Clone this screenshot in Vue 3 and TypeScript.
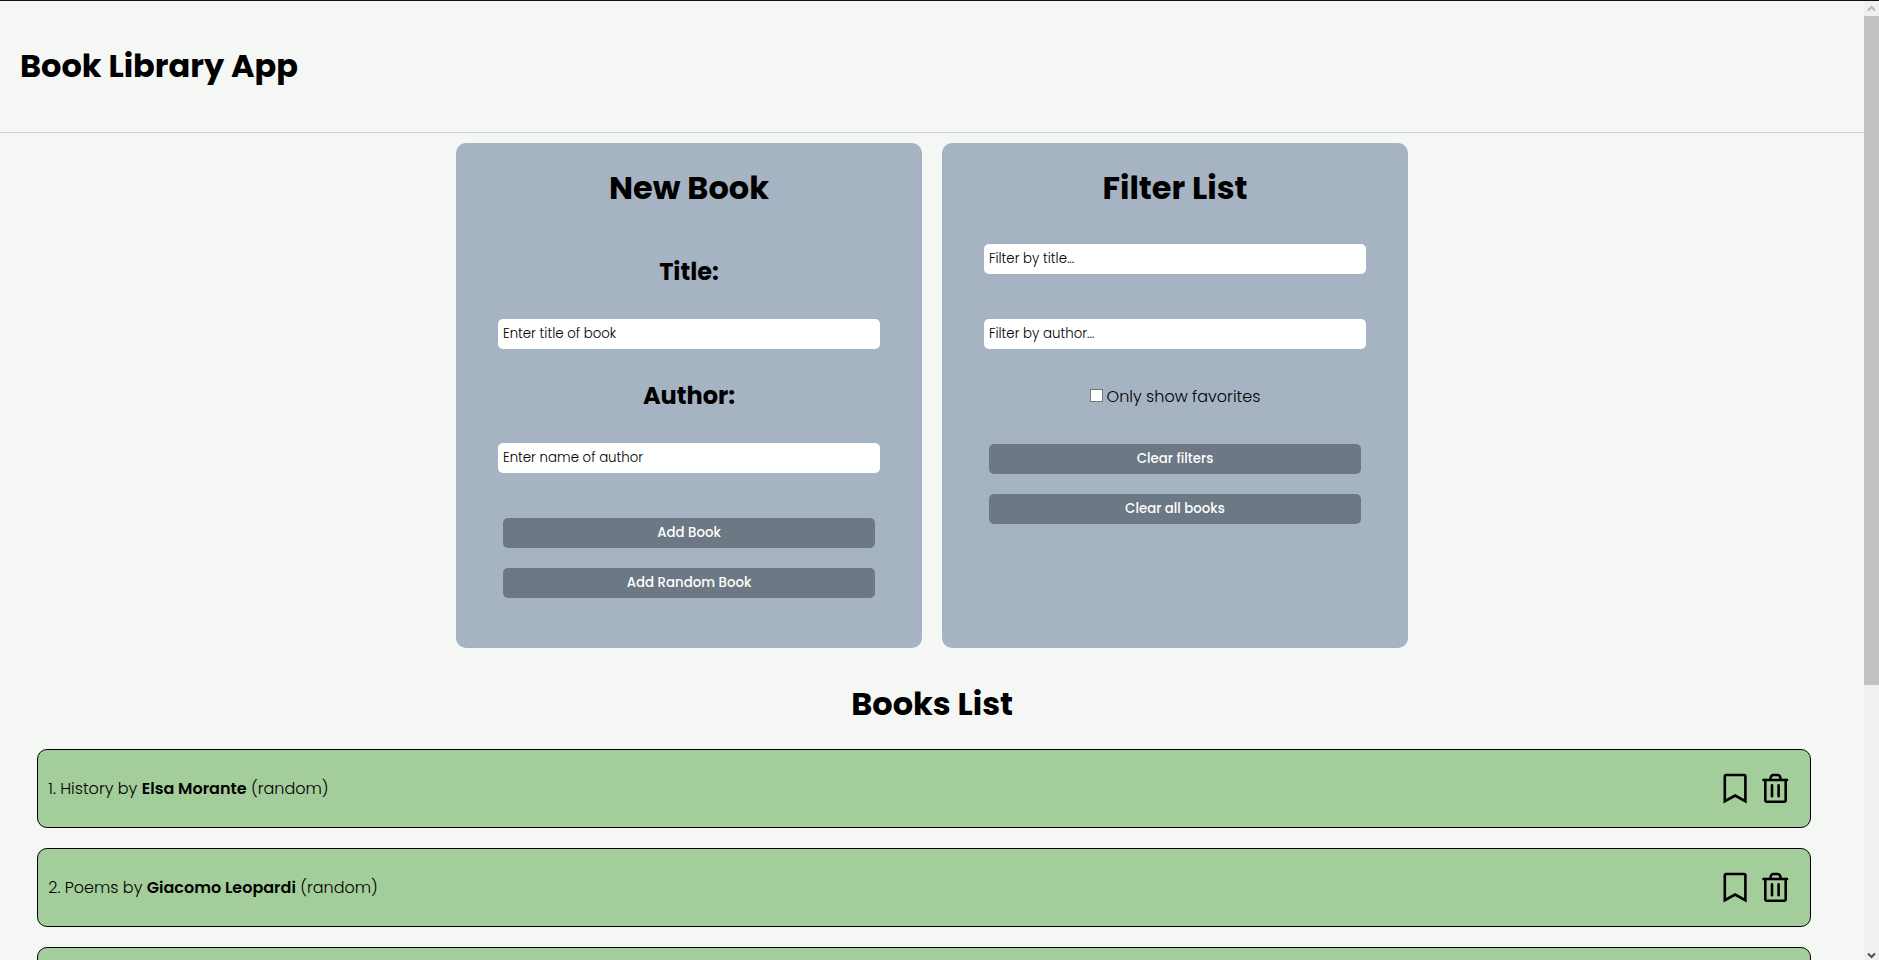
<script setup lang="ts">
import { computed, ref } from 'vue'

interface Book {
  id: number
  title: string
  author: string
  source: string
  favorite: boolean
}

const books = ref<Book[]>([
  { id: 1, title: 'History', author: 'Elsa Morante', source: 'random', favorite: false },
  { id: 2, title: 'Poems', author: 'Giacomo Leopardi', source: 'random', favorite: false },
  { id: 3, title: '', author: '', source: 'random', favorite: false },
])

const newTitle = ref('')
const newAuthor = ref('')
const titleFilter = ref('')
const authorFilter = ref('')
const onlyFavorites = ref(false)

const visibleBooks = computed(() =>
  books.value.filter(
    (book) =>
      book.title.toLowerCase().includes(titleFilter.value.toLowerCase()) &&
      book.author.toLowerCase().includes(authorFilter.value.toLowerCase()) &&
      (!onlyFavorites.value || book.favorite),
  ),
)

function pushBook(title: string, author: string, source: string) {
  const id = Math.max(0, ...books.value.map((book) => book.id)) + 1
  books.value.push({ id, title, author, source, favorite: false })
}

function addBook() {
  if (!newTitle.value || !newAuthor.value) return
  pushBook(newTitle.value, newAuthor.value, 'manual')
  newTitle.value = ''
  newAuthor.value = ''
}

function addRandomBook() {
  const pool = books.value.filter((book) => book.title)
  const pick = pool[Math.floor(Math.random() * pool.length)]
  if (pick) pushBook(pick.title, pick.author, 'random')
}

function clearFilters() {
  titleFilter.value = ''
  authorFilter.value = ''
  onlyFavorites.value = false
}

function removeBook(id: number) {
  books.value = books.value.filter((book) => book.id !== id)
}
</script>

<template>
  <div class="window">
    <div class="page">
      <header class="app-header">
        <h1>Book Library App</h1>
      </header>

      <main>
        <div class="panels">
          <form class="panel" @submit.prevent="addBook">
            <h2>New Book</h2>
            <label class="field-label" for="title">Title:</label>
            <input id="title" v-model="newTitle" class="field" type="text" placeholder="Enter title of book" />
            <label class="field-label" for="author">Author:</label>
            <input id="author" v-model="newAuthor" class="field" type="text" placeholder="Enter name of author" />
            <div class="actions add-actions">
              <button type="submit">Add Book</button>
              <button type="button" @click="addRandomBook">Add Random Book</button>
            </div>
          </form>

          <section class="panel">
            <h2>Filter List</h2>
            <div class="filters">
              <input v-model="titleFilter" class="field" type="text" placeholder="Filter by title..." aria-label="Filter by title..." />
              <input v-model="authorFilter" class="field" type="text" placeholder="Filter by author..." aria-label="Filter by author..." />
            </div>
            <label class="favorites">
              <input v-model="onlyFavorites" type="checkbox" />
              <span>Only show favorites</span>
            </label>
            <div class="actions">
              <button type="button" @click="clearFilters">Clear filters</button>
              <button type="button" @click="books = []">Clear all books</button>
            </div>
          </section>
        </div>

        <section class="books">
          <h2>Books List</h2>
          <ul>
            <li v-for="(book, index) in visibleBooks" :key="book.id">
              <p v-if="book.title">{{ index + 1 }}. {{ book.title }} by <strong>{{ book.author }}</strong> ({{ book.source }})</p>
              <div class="book-actions">
                <button type="button" :aria-pressed="book.favorite" @click="book.favorite = !book.favorite">
                  <svg viewBox="0 0 32 32" aria-hidden="true">
                    <path
                      d="M7.200 2h17.800a1.400 1.400 0 0 1 1.400 1.400V28.200L16.100 22.600 5.800 28.200V3.400A1.400 1.400 0 0 1 7.200 2Z"
                      :fill="book.favorite ? 'currentColor' : 'none'"
                      stroke="currentColor"
                      stroke-width="2.600"
                    />
                  </svg>
                </button>
                <button type="button" @click="removeBook(book.id)">
                  <svg viewBox="0 0 32 32" fill="none" stroke="currentColor" stroke-width="2.600" stroke-linecap="round" aria-hidden="true">
                    <path d="M4.500 7h23.500" />
                    <path d="M6.300 7v20.200a1.500 1.500 0 0 0 1.500 1.500h17.400a1.500 1.500 0 0 0 1.500-1.500V7" />
                    <path d="M11.300 6.500C11.600 3.300 12.600 2 14.300 2h4.400c1.700 0 2.700 1.300 3 4.500" />
                    <path d="M13 12.400v10.800M19.600 12.400v10.800" />
                  </svg>
                </button>
              </div>
            </li>
          </ul>
        </section>
      </main>
    </div>

    <div class="scrollbar" aria-hidden="true">
      <svg class="arrow up" viewBox="0 0 15 15"><path d="M4 9.500 7.500 6 11 9.500" /></svg>
      <div class="track"><div class="thumb"></div></div>
      <svg class="arrow" viewBox="0 0 15 15"><path d="M4 8.500 7.500 12 11 8.500" /></svg>
    </div>
  </div>
</template>

<style>
body {
  margin: 0;
  background: #f5f7f4;
}
</style>

<style scoped>
* {
  box-sizing: border-box;
}

.window {
  display: flex;
  height: 100vh;
  border-top: 1px solid #130d1c;
  overflow: hidden;
  background: #f5f7f4;
  color: #000;
  font-family: Poppins, Inter, 'Open Sans', sans-serif;
  font-size: 16px;
  font-weight: 300;
  line-height: 24px;
}

.page {
  flex: 1;
  min-width: 0;
  overflow: hidden;
}

h1,
h2 {
  margin: 0;
  font-size: 32px;
  font-weight: 700;
  line-height: 48px;
}

.app-header {
  padding: 41px 20px 42px;
  border-bottom: 1px solid #d0d3cf;
}

.panels {
  display: flex;
  justify-content: center;
  gap: 20px;
  padding-top: 10px;
}

.panel {
  display: flex;
  flex-direction: column;
  align-items: center;
  width: 25%;
  padding: 21px 0 50px;
  border-radius: 10px;
  background: #a6b3c3;
}

.field-label {
  margin-top: 30px;
  font-size: 24px;
  font-weight: 700;
  line-height: 34px;
}

h2 + .field-label {
  margin-top: 43px;
}

.field {
  width: 82%;
  height: 30px;
  margin-top: 30px;
  padding: 0 5px;
  border: 0;
  border-radius: 5px;
  background: #fff;
  color: #000;
  font-family: inherit;
  font-weight: 300;
}

.field::placeholder {
  color: #000;
  opacity: 1;
}

.filters {
  display: flex;
  flex-direction: column;
  align-items: center;
  gap: 45px;
  width: 100%;
  padding-top: 32px;
}

.filters .field {
  margin-top: 0;
}

.favorites {
  display: flex;
  align-items: flex-start;
  gap: 4px;
  margin: 36px 0 35px;
}

.favorites input {
  width: 13px;
  height: 13px;
  margin: 4px 0 0;
  border: 1px solid #767676;
  appearance: none;
  background: #fff;
}

.favorites input:checked {
  background: #0075ff;
}

.actions {
  display: flex;
  flex-direction: column;
  gap: 20px;
  width: 82%;
  padding: 0 5px;
}

.add-actions {
  margin-top: 45px;
}

.actions button {
  height: 30px;
  padding: 0;
  border: 0;
  border-radius: 5px;
  background: #6c7883;
  color: #fff;
  font-family: inherit;
  font-weight: 500;
  cursor: pointer;
}

.books {
  padding: 32px 53px 20px 2%;
}

.books h2 {
  padding-left: 16px;
  text-align: center;
}

.books ul {
  display: flex;
  flex-direction: column;
  gap: 20px;
  margin: 21px 0 0;
  padding: 0;
  list-style: none;
}

.books li {
  display: flex;
  align-items: center;
  min-height: 79px;
  padding: 0 19px 0 10px;
  border: 1px solid #000;
  border-radius: 10px;
  background: #a3cd9a;
}

.books p {
  margin: 0;
}

.books strong {
  font-weight: 600;
}

.book-actions {
  display: flex;
  gap: 8px;
  margin-left: auto;
}

.book-actions button {
  width: 32px;
  height: 32px;
  padding: 0;
  border: 0;
  background: none;
  color: #000;
  cursor: pointer;
}

.book-actions svg {
  display: block;
  width: 32px;
  height: 32px;
}

.scrollbar {
  display: flex;
  flex-direction: column;
  width: 15px;
  background: #f0f0f0;
}

.arrow {
  width: 15px;
  height: 15px;
  fill: none;
  stroke: #505050;
  stroke-width: 2;
}

.arrow.up {
  stroke: #b5b5b5;
}

.track {
  flex: 1;
}

.thumb {
  height: 72%;
  background: #c1c1c1;
}
</style>
